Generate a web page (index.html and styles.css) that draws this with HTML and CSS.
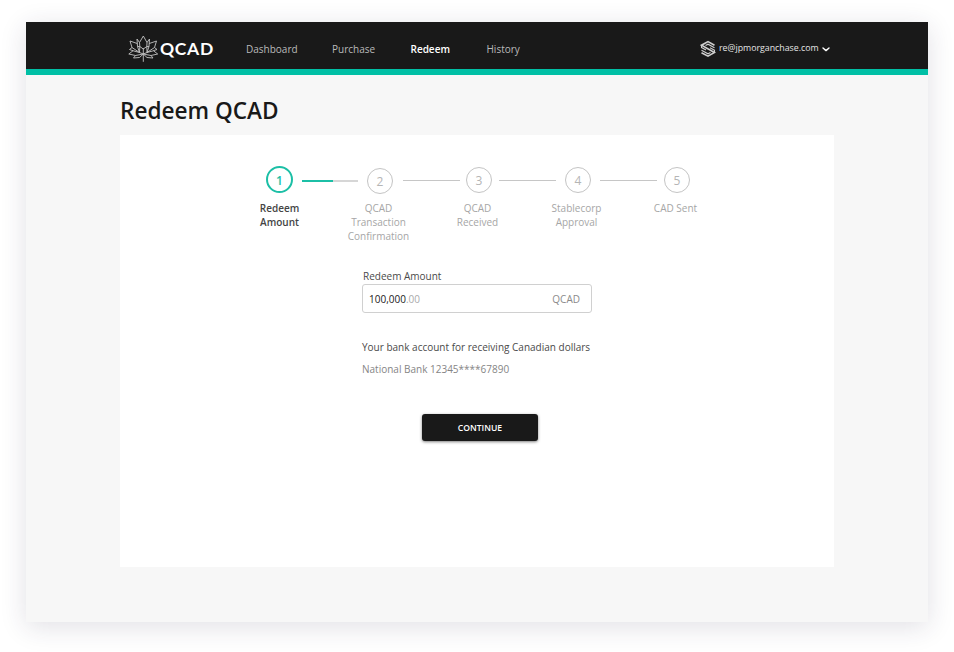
FILE: index.html
```html
<!DOCTYPE html>
<html lang="en">
<head>
<meta charset="utf-8">
<title>Redeem QCAD</title>
<link rel="stylesheet" href="styles.css">
</head>
<body>
<div class="app">
  <header class="header">
    <a class="brand">
      <svg class="leaf" viewBox="0 0 30 28" fill="none" stroke="#c4c4c4" stroke-width=".9" stroke-linejoin="round">
        <path d="M15.300 26.800V13M15.300 1L11.500 7.500L11.800 11.500L15.300 14L18.800 11.500L19 7.500ZM11.500 7.500L9 4L9.500 11.500L11.800 11.500M19 7.500L21.500 4L21 11.500L18.800 11.500M9.200 8.500L2 6L4 12.500L11.500 17.500L9.500 11.500M21.300 8.500L28.500 6L26.500 12.500L19 17.500L21 11.500M11.800 11.500L11.500 17.500L15.300 19L19 17.500L18.800 11.500M4 12.500L1.500 14.500L6 16L11.500 17.500M26.500 12.500L29 14.500L24.500 16L19 17.500M5 15.800L.8 19L7.500 20.500L15.300 19L23 20.500L29.700 19L25.500 15.800M7.500 20.500L5.500 23L11.500 22.500L15.300 19L19 22.500L25 23L23 20.500"/>
      </svg>
      <span class="wordmark">QCAD</span>
    </a>
    <nav class="nav">
      <a class="nav-dashboard">Dashboard</a>
      <a class="nav-purchase">Purchase</a>
      <a class="nav-redeem active">Redeem</a>
      <a class="nav-history">History</a>
    </nav>
    <div class="account">
      <svg class="hex" viewBox="0 0 16 18" fill="none" stroke="#cfcfcf">
        <path stroke-width="1.600" d="M14.500 5.200L8 1.600L1.500 5.200L14.500 12.500L8 16.200L1.500 12.700"/>
        <path stroke-width="1.100" d="M14.500 7.700L8 4.200L5.500 5.600M1.500 10.200L8 13.800L10.500 12.400M1.500 7.500L6 10M10 7.800L14.500 10.200M1.500 5.200V8M14.500 9.800V12.500"/>
      </svg>
      <span class="email">re@jpmorganchase.com</span>
      <svg class="chevron" viewBox="0 0 8 5" fill="none" stroke="#fff" stroke-width="1.400" stroke-linecap="round" stroke-linejoin="round"><path d="M1 1L4 3.600L7 1"/></svg>
    </div>
  </header>
  <main class="main">
    <h1 class="title">Redeem QCAD</h1>
    <section class="card">
      <div class="track">
        <span class="dot dot-1">1</span><span class="line line-1"></span>
        <span class="dot dot-2">2</span><span class="line line-2"></span>
        <span class="dot dot-3">3</span><span class="line line-3"></span>
        <span class="dot dot-4">4</span><span class="line line-4"></span>
        <span class="dot dot-5">5</span>
      </div>
      <div class="labels">
        <span class="current">Redeem<br>Amount</span>
        <span>QCAD<br>Transaction<br>Confirmation</span>
        <span>QCAD<br>Received</span>
        <span>Stablecorp<br>Approval</span>
        <span>CAD Sent</span>
      </div>
      <form class="form">
        <label class="field-label">Redeem Amount</label>
        <div class="field"><span class="amount">100,000<span class="cents">.00</span></span><span class="unit">QCAD</span></div>
        <p class="bank-label">Your bank account for receiving Canadian dollars</p>
        <p class="bank">National Bank 12345****67890</p>
        <button class="continue" type="button">CONTINUE</button>
      </form>
    </section>
  </main>
</div>
</body>
</html>
```
FILE: styles.css
```css
* { box-sizing: border-box; }
body {
  margin: 0;
  padding: 22px 26px 30px;
  height: 652px;
  overflow: hidden;
  background: #fff;
  font-family: "Open Sans", sans-serif;
  font-size: 10px;
  color: #4a4a4a;
}
.app {
  height: 600px;
  background: #f7f7f7;
  box-shadow: 0 5px 25px rgba(40, 35, 70, .14);
}
.header {
  display: flex;
  height: 53px;
  padding-left: 102px;
  background: #191919;
  border-bottom: 6px solid #00bfa5;
}
.brand { display: flex; width: 118px; }
.leaf { width: 30px; height: 28px; margin-top: 13px; }
.wordmark {
  margin: 15px 0 0 2px;
  font: 700 17.5px/24px Lato, sans-serif;
  letter-spacing: .7px;
  color: #fff;
}
.nav { display: flex; width: 454px; line-height: 16px; padding-top: 19px; color: #b9b9b9; }
.nav-dashboard { width: 86px; }
.nav-purchase { width: 78.500px; }
.nav-redeem { width: 76px; }
.nav .active { color: #fff; font-weight: 600; }
.account { display: flex; color: #e4e4e4; }
.hex { width: 16px; height: 18px; margin-top: 18px; }
.email { margin-left: 3px; font-size: 8.8px; line-height: 14px; padding-top: 19px; }
.chevron { width: 8px; height: 5px; margin: 25px 0 0 3px; }
.main { padding: 20px 94px 0; }
.title {
  margin: 0;
  height: 40px;
  font-size: 22.6px;
  line-height: 32px;
  font-weight: 600;
  color: #191919;
}
.card { height: 432px; padding-top: 31px; background: #fff; }
.track { display: flex; height: 30px; padding-left: 146px; }
.dot {
  flex: none;
  width: 26px;
  height: 26px;
  border: 1px solid #c4c4c4;
  border-radius: 50%;
  font-size: 12px;
  line-height: 25px;
  text-align: center;
  color: #b5b5b5;
}
.dot-1 { width: 27px; height: 27px; border: 2px solid #1cbfa6; color: #1cbfa6; font-weight: 600; }
.dot-2 { margin-top: 2px; }
.dot-3, .dot-4 { margin-top: 1px; }
.dot-5 { margin-top: 1px; line-height: 26px; }
.line { flex: none; height: 1px; margin-top: 14px; background: #c6c6c6; }
.line-1 { width: 56px; height: 2px; margin-left: 9px; margin-right: 9px; background: linear-gradient(90deg, #1cbfa6 31px, #d6d6d6 31px); }
.line-2 { width: 57px; margin-left: 10px; margin-right: 6px; }
.line-3 { width: 57px; margin-left: 7px; margin-right: 9px; }
.line-4 { width: 57px; margin-left: 9px; margin-right: 7px; }
.labels {
  display: grid;
  grid-template-columns: repeat(5, 99px);
  padding: 6px 0 0 110px;
  height: 73px;
  line-height: 13.8px;
  text-align: center;
  color: #a6a6a6;
}
.labels .current { color: #444; font-weight: 600; }
.form { width: 230px; margin-left: 242px; }
.field-label { display: block; height: 15px; padding-left: 1px; line-height: 15px; }
.field {
  display: flex;
  justify-content: space-between;
  height: 29px;
  padding: 0 11px 0 6px;
  border: 1px solid #d0d0d0;
  border-radius: 3px;
  line-height: 28px;
}
.amount { color: #191919; }
.cents { color: #aaa; }
.unit { color: #8a8a8a; }
.bank-label, .bank { margin: 0; line-height: 16px; white-space: nowrap; }
.bank-label { margin-top: 26px; }
.bank { margin-top: 6px; color: #858585; }
.continue {
  display: block;
  width: 116px;
  height: 27px;
  margin: 37px 0 0 60px;
  padding: 1px 0 0;
  border: 0;
  border-radius: 3px;
  background: #191919;
  box-shadow: 0 1px 3px rgba(0, 0, 0, .5);
  color: #fff;
  font: 600 8.6px/26px "Open Sans", sans-serif;
}
```
